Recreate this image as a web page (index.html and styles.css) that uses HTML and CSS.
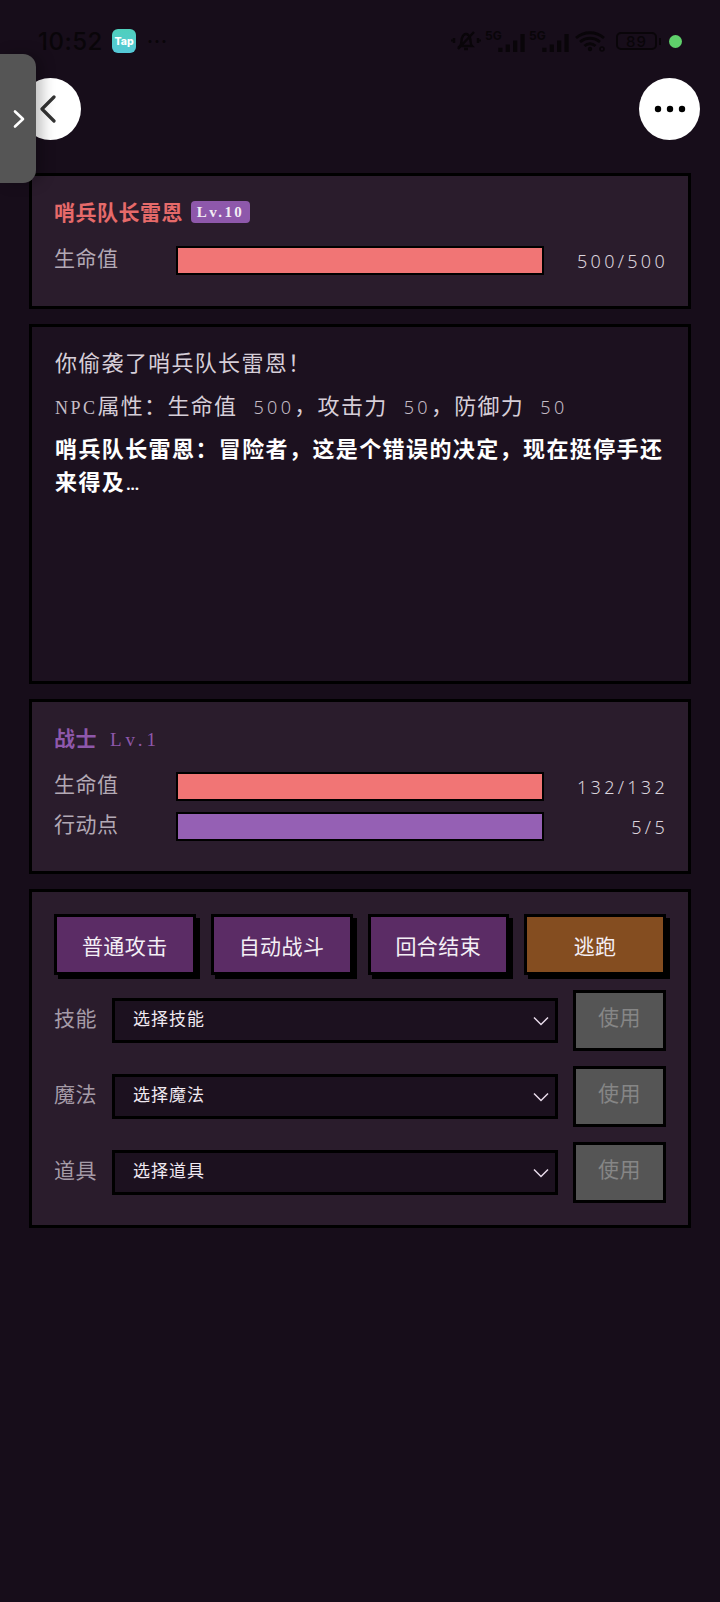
FILE: index.html
```html
<!DOCTYPE html>
<html lang="zh-CN">
<head>
<meta charset="utf-8">
<title>战斗</title>
<link rel="stylesheet" href="styles.css">
</head>
<body>
<div class="status-bar">
  <div class="status-left">
    <span class="clock">10:52</span>
    <span class="tap-icon">Tap</span>
    <span class="status-dots">···</span>
  </div>
  <div class="status-right">
    <svg class="st-bell" viewBox="0 0 30 24" width="30" height="24"><path d="M9 17c2-2 1-5 2-8 1-3 3-4 4-4s3 1 4 4c1 3 0 6 2 8z M13 20h4 M7 20 23 3 M3 9v5 M1 10.500v2 M27 9v5 M29 10.500v2" fill="none" stroke="#090509" stroke-width="2.400"/></svg>
    <span class="st-sig"><span class="st-5g">5G</span><svg viewBox="0 0 28 18" width="30" height="19"><path d="M3 14v4 M10 11v7 M17 7v11 M24 1v17" stroke="#090509" stroke-width="4" fill="none"/></svg></span>
    <span class="st-sig"><span class="st-5g">5G</span><svg viewBox="0 0 28 18" width="30" height="19"><path d="M3 14v4 M10 11v7 M17 7v11 M24 1v17" stroke="#090509" stroke-width="4" fill="none"/></svg></span>
    <svg class="st-wifi" viewBox="0 0 32 22" width="32" height="22"><path d="M2 8c8-7 20-7 28 0 M6 12c6-5 14-5 20 0 M10.500 16c3-3 8-3 11 0" fill="none" stroke="#090509" stroke-width="2.800"/><circle cx="16" cy="19" r="2.200" fill="#090509"/><circle cx="28" cy="19" r="2" fill="none" stroke="#090509" stroke-width="1.600"/></svg>
    <span class="st-batt"><span class="st-batt-num">89</span></span>
    <span class="st-batt-tip"></span>
    <span class="st-green"></span>
  </div>
</div>

<div class="side-handle">
  <svg viewBox="0 0 14 20" width="14" height="20"><path d="M3 2.500 11 10 3 17.500" fill="none" stroke="#fff" stroke-width="2.600" stroke-linecap="round" stroke-linejoin="round"/></svg>
</div>

<div class="nav">
  <button class="round-btn back-btn" type="button" aria-label="返回">
    <svg viewBox="0 0 18 28" width="18" height="28"><path d="M15 2 3 14 15 26" fill="none" stroke="#333" stroke-width="3.200" stroke-linecap="round" stroke-linejoin="round"/></svg>
  </button>
  <button class="round-btn" type="button" aria-label="更多">
    <svg viewBox="0 0 32 8" width="32" height="8"><circle cx="4" cy="4" r="3.200" fill="#000"/><circle cx="16" cy="4" r="3.200" fill="#000"/><circle cx="28" cy="4" r="3.200" fill="#000"/></svg>
  </button>
</div>

<main class="game">
  <section class="panel enemy">
    <div class="title-row">
      <span class="enemy-name">哨兵队长雷恩</span>
      <span class="lv-badge">Lv.10</span>
    </div>
    <div class="stat-row">
      <span class="stat-label">生命值</span>
      <div class="bar"><div class="bar-fill hp"></div></div>
      <span class="stat-value">500/500</span>
    </div>
  </section>

  <section class="panel log">
    <p class="log-line">你偷袭了哨兵队长雷恩！</p>
    <p class="log-line"><span class="serif">NPC</span>属性：生命值 <span class="num">500</span>，攻击力 <span class="num">50</span>，防御力 <span class="num">50</span></p>
    <p class="log-line strong">哨兵队长雷恩：冒险者，这是个错误的决定，现在挺停手还来得及<span class="latin">…</span></p>
  </section>

  <section class="panel">
    <div class="title-row">
      <span class="hero-name">战士</span>
      <span class="hero-lv">Lv.1</span>
    </div>
    <div class="stat-list">
      <div class="stat-row">
        <span class="stat-label">生命值</span>
        <div class="bar"><div class="bar-fill hp"></div></div>
        <span class="stat-value">132/132</span>
      </div>
      <div class="stat-row">
        <span class="stat-label">行动点</span>
        <div class="bar"><div class="bar-fill ap"></div></div>
        <span class="stat-value">5/5</span>
      </div>
    </div>
  </section>

  <section class="panel actions">
    <div class="action-grid">
      <button class="action" type="button">普通攻击</button>
      <button class="action" type="button">自动战斗</button>
      <button class="action" type="button">回合结束</button>
      <button class="action flee" type="button">逃跑</button>
    </div>
    <div class="pick-row">
      <span class="pick-label">技能</span>
      <div class="select"><span>选择技能</span><svg viewBox="0 0 16 10" width="16" height="10"><path d="M1 1.500 8 8.500 15 1.500" fill="none" stroke="#e8dcea" stroke-width="1.500"/></svg></div>
      <button class="use" type="button">使用</button>
    </div>
    <div class="pick-row">
      <span class="pick-label">魔法</span>
      <div class="select"><span>选择魔法</span><svg viewBox="0 0 16 10" width="16" height="10"><path d="M1 1.500 8 8.500 15 1.500" fill="none" stroke="#e8dcea" stroke-width="1.500"/></svg></div>
      <button class="use" type="button">使用</button>
    </div>
    <div class="pick-row">
      <span class="pick-label">道具</span>
      <div class="select"><span>选择道具</span><svg viewBox="0 0 16 10" width="16" height="10"><path d="M1 1.500 8 8.500 15 1.500" fill="none" stroke="#e8dcea" stroke-width="1.500"/></svg></div>
      <button class="use" type="button">使用</button>
    </div>
  </section>
</main>
</body>
</html>
```
FILE: styles.css
```css
* { box-sizing: border-box; }
html, body { margin: 0; padding: 0; }
body {
  width: 720px;
  height: 1602px;
  overflow: hidden;
  position: relative;
  background: #170d1a;
  color: #e6dfe8;
  font-family: "Noto Sans CJK SC", "Noto Sans", sans-serif;
  letter-spacing: .5px;
}
button { font-family: inherit; letter-spacing: inherit; cursor: pointer; }

.status-bar {
  height: 78px;
  padding: 0 29px 0 38px;
  display: flex;
  align-items: flex-start;
  justify-content: space-between;
}
.status-left { display: flex; align-items: center; height: 24px; margin-top: 29px; }
.clock { font: 500 24px "Inter", sans-serif; color: #090509; letter-spacing: .5px; width: 74px; }
.tap-icon {
  width: 24px; height: 24px; border-radius: 6px;
  background: linear-gradient(#4fd0bc, #55c8d8);
  color: #fff; font: 800 10.500px "Inter", sans-serif; letter-spacing: 0;
  display: flex; align-items: center; justify-content: center;
}
.status-dots { margin-left: 11px; color: #090509; font: 700 18px "Inter", sans-serif; letter-spacing: 1px; }
.status-right { display: flex; align-items: center; height: 24px; margin-top: 29px; }
.st-bell { margin-right: 2px; }
.st-sig { position: relative; width: 44px; height: 22px; display: flex; align-items: flex-end; justify-content: flex-end; }
.st-5g { position: absolute; left: 2px; top: -2px; font: 700 12px "Inter", sans-serif; letter-spacing: 0; color: #090509; }
.st-wifi { margin: 0 0 0 3px; }
.st-batt { margin-left: 10px; width: 41px; height: 18px; border: 2px solid #090509; border-radius: 5px; display: flex; align-items: center; justify-content: center; }
.st-batt-num { font: 500 15px "Inter", sans-serif; letter-spacing: 1px; color: #090509; }
.st-batt-tip { width: 2px; height: 7px; margin-left: 2px; background: #090509; }
.st-green { width: 13px; height: 13px; border-radius: 50%; background: #5fd06b; margin-left: 8px; margin-right: 9px; }

.side-handle {
  position: absolute; left: 0; top: 54px;
  width: 36px; height: 129px;
  background: #555;
  border-radius: 0 13px 13px 0;
  display: flex; align-items: center; justify-content: center;
  padding-left: 2px;
  box-shadow: 6px 0 14px rgba(0, 0, 0, .25);
}

.nav {
  height: 95px;
  padding: 0 20px;
  display: flex;
  justify-content: space-between;
  align-items: flex-start;
}
.round-btn {
  width: 61px; height: 62px;
  border: 0; border-radius: 50%;
  background: #fff;
  display: flex; align-items: center; justify-content: center;
  padding: 0;
}
.back-btn svg { margin-left: -6px; }

.game { padding: 0 29px; display: flex; flex-direction: column; gap: 15px; }
.panel {
  border: 3px solid #000;
  background: #2a1c2c;
  padding: 22px;
}
.title-row { height: 36px; margin-bottom: 12px; display: flex; align-items: flex-start; }
.enemy-name, .hero-name { font-size: 21px; font-weight: 700; line-height: 26px; }
.enemy-name { color: #e66a6a; }
.hero-name { color: #8e58ab; }
.lv-badge {
  margin: 3px 0 0 8px;
  width: 59px;
  text-align: center;
  background: #8e58ab;
  border-radius: 4px;
  color: #f2ecf4;
  font: 700 15px/22px "Liberation Serif", serif;
  letter-spacing: 2.400px;
}
.hero-lv { margin: 3px 0 0 13px; color: #8e58ab; font: 400 19px/26px "Liberation Serif", serif; letter-spacing: 4px; }

.stat-list { display: flex; flex-direction: column; gap: 11px; margin-bottom: 8px; }
.stat-row { display: flex; align-items: center; height: 29px; }
.enemy .stat-row { margin-bottom: 9px; }
.stat-label { width: 122px; flex: none; font-size: 21px; color: #b3a9b5; position: relative; top: -4px; }
.bar { flex: 1; height: 29px; border: 2px solid #000; background: #000; }
.bar-fill { height: 100%; width: 100%; }
.hp { background: #f17575; }
.ap { background: #9560b4; }
.stat-value { width: 124px; flex: none; text-align: right; font: 300 18px "Noto Sans", sans-serif; letter-spacing: 3.300px; color: #dcd5de; margin-right: -2px; }

.log { height: 360px; background: #1c111f; padding-top: 18px; padding-left: 23px; }
.log-line { margin: 0 0 11px; font-size: 22px; line-height: 32px; letter-spacing: 1.300px; color: #d6ced8; }
.log-line.strong { color: #fff; font-weight: 700; letter-spacing: 1.400px; line-height: 33px; }
.serif { font: 400 18px/1 "Liberation Serif", serif; letter-spacing: 2.500px; color: #c4bcc6; }
.num { font: 300 18px/1 "Noto Sans", sans-serif; letter-spacing: 3.300px; color: #c4bcc6; margin-left: 10px; }
.latin { font: 700 15px/1 "Noto Sans", sans-serif; letter-spacing: 0; margin-left: 1px; }

.action-grid { display: grid; grid-template-columns: repeat(4, 1fr); gap: 15px; margin-bottom: 15px; }
.action {
  height: 61px;
  border: 3px solid #000;
  background: #5b2c65;
  color: #f4eff5;
  font-size: 21px;
  box-shadow: 4px 4px 0 #000;
  padding: 0;
}
.flee { background: #844d20; }
.pick-row { display: flex; align-items: center; height: 61px; margin-bottom: 15px; }
.pick-row:last-child { margin-bottom: 0; }
.pick-label { width: 58px; flex: none; font-size: 21px; color: #a59ba7; position: relative; top: -4px; }
.select {
  flex: 1; height: 45px;
  border: 3px solid #000;
  background: #1c111f;
  color: #f0e9f1;
  font-size: 17px;
  letter-spacing: 1px;
  padding: 0 6px 0 18px;
  display: flex; align-items: center; justify-content: space-between;
}
.select span { position: relative; top: -3px; }
.use {
  width: 93px; height: 61px;
  margin-left: 15px;
  border: 3px solid #000;
  background: #555;
  color: #868686;
  font-size: 21px;
  padding: 0 0 9px;
}
```
